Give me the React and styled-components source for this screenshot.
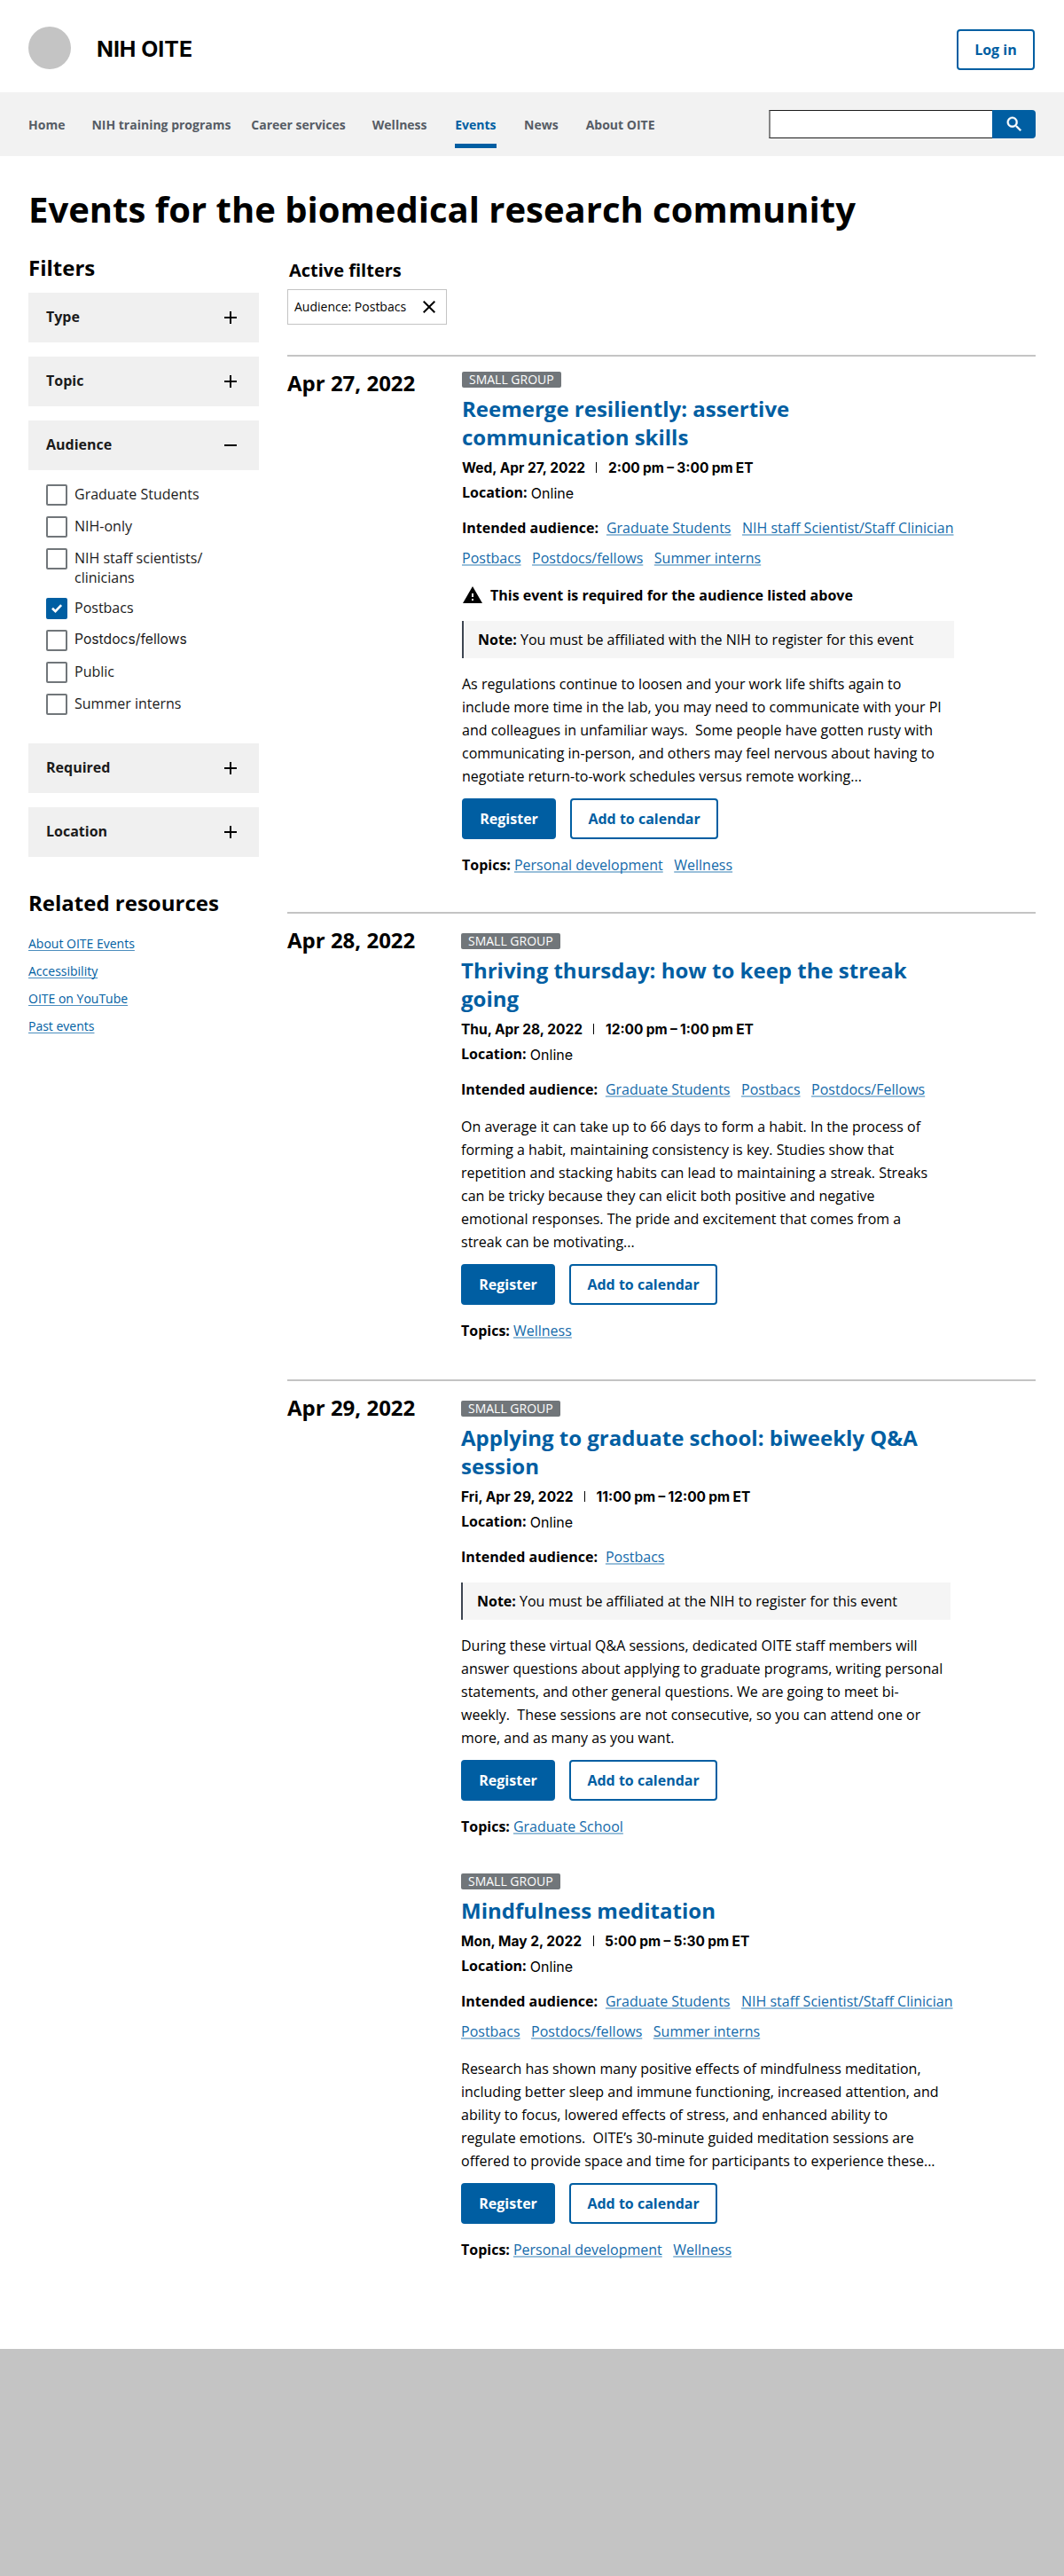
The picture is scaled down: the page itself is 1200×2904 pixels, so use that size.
import React from 'react';
import styled, { createGlobalStyle } from 'styled-components';

const blue = '#005ea2';
const sans = '"Open Sans", "Noto Sans", sans-serif';
const alt = 'Inter, Roboto, sans-serif';

const GlobalStyle = createGlobalStyle`
  * { box-sizing: border-box; }
  body { margin: 0; background: #fff; color: #000; font: 400 16px/26px ${sans}; }
  h1, h2, h3, p, ul { margin: 0; padding: 0; }
  ul { list-style: none; }
  button { font: inherit; }
`;

const Page = styled.div`
  width: 1200px;
`;

const Header = styled.header`
  display: flex;
  align-items: center;
  height: 104px;
  padding: 8px 33px 0 32px;
`;

const Logo = styled.div`
  width: 48px;
  height: 48px;
  border-radius: 50%;
  background: #c4c4c4;
  flex: none;
  margin-top: -4px;
`;

const Brand = styled.div`
  margin: -2px auto 0 29px;
  font: 700 24.8px/32px ${alt};
`;

const Button = styled.button`
  height: 46px;
  padding: 0 18.3px;
  border: 2px solid ${blue};
  border-radius: 4px;
  background: ${(p) => (p.$primary ? blue : '#fff')};
  color: ${(p) => (p.$primary ? '#fff' : blue)};
  font-weight: 700;
  line-height: 22px;
  white-space: nowrap;
`;

const NavBar = styled.nav`
  display: flex;
  align-items: center;
  height: 72px;
  padding: 0 32px;
  background: #f2f2f2;
`;

const NavItem = styled.a`
  position: relative;
  margin: 2px ${(p) => p.$gap}px 0 0;
  color: ${(p) => (p.$active ? blue : '#565c65')};
  font-size: 14px;
  font-weight: 700;
  line-height: 20px;
  white-space: nowrap;
  &::after {
    content: '';
    display: ${(p) => (p.$active ? 'block' : 'none')};
    position: absolute;
    left: 0;
    right: 0;
    top: 31px;
    height: 5px;
    background: ${blue};
  }
`;

const Search = styled.form`
  display: flex;
  margin-left: auto;
`;

const SearchInput = styled.input`
  width: 252px;
  height: 32px;
  padding: 0 8px;
  border: 1px solid #1b1b1b;
  border-left: 2px solid #868686;
  border-right: 0;
  border-radius: 0;
  background: #fff;
`;

const SearchButton = styled.button`
  display: flex;
  align-items: center;
  justify-content: center;
  width: 49px;
  height: 32px;
  padding: 0;
  border: 0;
  border-radius: 0 4px 4px 0;
  background: ${blue};
`;

const Main = styled.main`
  padding: 33px 32px 99px;
`;

const PageTitle = styled.h1`
  font-size: 40px;
  line-height: 54px;
`;

const Columns = styled.div`
  display: grid;
  grid-template-columns: 260px 844px;
  column-gap: 32px;
  align-items: start;
  margin-top: 23px;
`;

const SideHeading = styled.h2`
  font-size: 24px;
  line-height: 32px;
`;

const Accordion = styled.div`
  display: flex;
  flex-direction: column;
  gap: 16px;
  margin: 12px 0 36px;
`;

const AccordionHead = styled.div`
  display: flex;
  align-items: center;
  justify-content: space-between;
  height: 56px;
  padding: 0 20px;
  background: #f0f0f0;
  color: #1b1b1b;
  font-weight: 700;
  line-height: 22px;
`;

const AccordionLabel = styled.span`
  padding-bottom: 2px;
`;

const Options = styled.ul`
  display: flex;
  flex-direction: column;
  gap: 12px;
  padding: 0 20px 16px;
`;

const Option = styled.li`
  display: flex;
  gap: 8px;
  min-height: 24px;
  color: #1b1b1b;
  line-height: 22px;
`;

const Checkbox = styled.span`
  flex: none;
  width: 24px;
  height: 24px;
  border: 2px solid ${(p) => (p.$checked ? blue : '#71767a')};
  border-radius: 2px;
  background: ${(p) => (p.$checked ? blue : '#fff')};
  svg { display: block; margin: -2px; }
`;

const OptionText = styled.span`
  white-space: pre;
  ${(p) => p.$alt && `font-family: ${alt}; font-size: 15.7px; line-height: 21px;`}
`;

const Resources = styled.ul`
  margin-top: 14px;
  font-size: 14px;
  line-height: 31px;
`;

const SideLink = styled.a`
  color: ${blue};
  text-decoration: underline 1px #4d8ebe;
  text-underline-offset: 2px;
  text-decoration-skip-ink: none;
`;

const FiltersHeading = styled.h2`
  margin: 5px 0 7px 2px;
  font-size: 20px;
  line-height: 28px;
`;

const Tag = styled.div`
  display: inline-flex;
  align-items: center;
  justify-content: space-between;
  width: 180px;
  height: 40px;
  padding: 0 7px;
  border: 1px solid #c4c4c4;
  font-size: 14px;
  line-height: 20px;
`;

const ActiveFilters = styled.div`
  display: flex;
  height: 40px;
  margin-bottom: 34px;
`;

const DayGroup = styled.section`
  display: grid;
  grid-template-columns: ${(p) => (p.$first ? '197px' : '196px')} 560px;
  border-top: 2px solid #c4c4c4;
  padding: 14px 0 ${(p) => p.$bottom}px;
`;

const DayHeading = styled.h2`
  font-size: 24px;
  line-height: 32px;
`;

const DayEvents = styled.div`
  display: flex;
  flex-direction: column;
  gap: 40px;
  padding-top: ${(p) => (p.$first ? 3 : 8)}px;
`;

const Event = styled.article`
  display: flex;
  flex-direction: column;
  align-items: flex-start;
`;

const Badge = styled.span`
  height: 18px;
  padding: 0 8px;
  border-radius: 2px;
  background: #71767a;
  color: #fff;
  font-size: 14px;
  line-height: 18px;
`;

const EventTitle = styled.h3`
  margin: 8px 0 4px;
  color: ${blue};
  font-size: 24px;
  line-height: 32px;
  white-space: pre;
`;

const When = styled.div`
  display: flex;
  align-items: flex-start;
  height: 28px;
  font: 700 15.5px/30px ${alt};
  white-space: nowrap;
`;

const Bar = styled.span`
  width: 1px;
  height: 12px;
  margin: 8px 12.5px 0;
  background: #000;
`;

const Time = styled.span`
  word-spacing: -0.4px;
`;

const Where = styled.div`
  height: 28px;
  line-height: 28px;
`;

const Place = styled.span`
  font-family: ${alt};
  line-height: 20px;
  vertical-align: -1px;
`;

const Audience = styled.div`
  display: flex;
  flex-wrap: wrap;
  column-gap: 12.5px;
  width: 560px;
  margin-top: 9px;
  line-height: 34px;
`;

const AudienceLabel = styled.strong`
  margin-right: -3.6px;
`;

const Link = styled.a`
  color: #146aaa;
  text-decoration: underline 2px #99bfda;
  text-underline-offset: 1px;
  text-decoration-skip-ink: none;
`;

const Required = styled.div`
  display: flex;
  gap: 8px;
  height: 24px;
  margin: 13px 0 5px;
  font-weight: 700;
  line-height: 24px;
`;

const Note = styled.div`
  width: ${(p) => p.$width}px;
  height: 42px;
  margin: 12px 0 4px;
  padding-left: 16px;
  border-left: 2px solid #3d4551;
  background: #f5f5f5;
  line-height: 42px;
`;

const Summary = styled.p`
  margin: 12px 0;
  white-space: pre;
`;

const Actions = styled.div`
  display: flex;
  gap: 16px;
`;

const Topics = styled.div`
  display: flex;
  column-gap: 12.5px;
  margin-top: 16px;
`;

const TopicsLabel = styled.strong`
  margin-right: -8.5px;
`;

const Footer = styled.footer`
  height: 256px;
  background: #c4c4c4;
`;

const Icon = ({ d, size = 24, fill = '#000', ...rest }) => (
  <svg width={size} height={size} viewBox="0 0 24 24" fill={fill} {...rest}>
    <path d={d} />
  </svg>
);

const icons = {
  add: 'M19 13h-6v6h-2v-6H5v-2h6V5h2v6h6v2z',
  remove: 'M19 13H5v-2h14v2z',
  close: 'M19 6.41 17.59 5 12 10.59 6.41 5 5 6.41 10.59 12 5 17.59 6.41 19 12 13.41 17.59 19 19 17.59 13.41 12z',
  warning: 'M1 21h22L12 2 1 21zm12-3h-2v-2h2v2zm0-4h-2v-4h2v4z',
  search:
    'M15.5 14h-.79l-.28-.27A6.471 6.471 0 0 0 16 9.5 6.5 6.5 0 1 0 9.5 16c1.61 0 3.09-.59 4.23-1.57l.27.28v.79l5 4.99L20.49 19l-4.99-5zm-6 0C7.01 14 5 11.99 5 9.5S7.01 5 9.5 5 14 7.01 14 9.5 11.99 14 9.5 14z',
};

const Check = () => (
  <svg width="24" height="24" viewBox="0 0 24 24" fill="none" stroke="#fff" strokeWidth="2.6">
    <path d="M7 11.8l3.5 3.4 6.6-7" />
  </svg>
);

const nav = [
  ['Home', 30],
  ['NIH training programs', 22.8],
  ['Career services', 30],
  ['Wellness', 31.7],
  ['Events', 31.5],
  ['News', 31],
  ['About OITE', 0],
];

const options = [
  'Graduate Students',
  'NIH-only',
  'NIH staff scientists/\nclinicians',
  'Postbacs',
  'Postdocs/fellows',
  'Public',
  'Summer interns',
];

const everyone = [
  'Graduate Students',
  'NIH staff Scientist/Staff Clinician',
  'Postbacs',
  'Postdocs/fellows',
  'Summer interns',
];

const days = [
  {
    date: 'Apr 27, 2022',
    bottom: 40,
    events: [
      {
        title: 'Reemerge resiliently: assertive\ncommunication skills',
        day: 'Wed, Apr 27, 2022',
        time: '2:00 pm – 3:00 pm ET',
        audience: everyone,
        required: true,
        note: 'You must be affiliated with the NIH to register for this event',
        noteWidth: 555,
        summary: `As regulations continue to loosen and your work life shifts again to
include more time in the lab, you may need to communicate with your PI
and colleagues in unfamiliar ways.  Some people have gotten rusty with
communicating in-person, and others may feel nervous about having to
negotiate return-to-work schedules versus remote working...`,
        topics: ['Personal development', 'Wellness'],
      },
    ],
  },
  {
    date: 'Apr 28, 2022',
    bottom: 42,
    events: [
      {
        title: 'Thriving thursday: how to keep the streak\ngoing',
        day: 'Thu, Apr 28, 2022',
        time: '12:00 pm – 1:00 pm ET',
        audience: ['Graduate Students', 'Postbacs', 'Postdocs/Fellows'],
        summary: `On average it can take up to 66 days to form a habit. In the process of
forming a habit, maintaining consistency is key. Studies show that
repetition and stacking habits can lead to maintaining a streak. Streaks
can be tricky because they can elicit both positive and negative
emotional responses. The pride and excitement that comes from a
streak can be motivating...`,
        topics: ['Wellness'],
      },
    ],
  },
  {
    date: 'Apr 29, 2022',
    bottom: 0,
    events: [
      {
        title: 'Applying to graduate school: biweekly Q&A\nsession',
        day: 'Fri, Apr 29, 2022',
        time: '11:00 pm – 12:00 pm ET',
        audience: ['Postbacs'],
        note: 'You must be affiliated at the NIH to register for this event',
        noteWidth: 552,
        summary: `During these virtual Q&A sessions, dedicated OITE staff members will
answer questions about applying to graduate programs, writing personal
statements, and other general questions. We are going to meet bi-
weekly.  These sessions are not consecutive, so you can attend one or
more, and as many as you want.`,
        topics: ['Graduate School'],
      },
      {
        title: 'Mindfulness meditation',
        day: 'Mon, May 2, 2022',
        time: '5:00 pm – 5:30 pm ET',
        audience: everyone,
        summary: `Research has shown many positive effects of mindfulness meditation,
including better sleep and immune functioning, increased attention, and
ability to focus, lowered effects of stress, and enhanced ability to
regulate emotions.  OITE’s 30-minute guided meditation sessions are
offered to provide space and time for participants to experience these...`,
        topics: ['Personal development', 'Wellness'],
      },
    ],
  },
];

const EventCard = ({ event }) => (
  <Event>
    <Badge>SMALL GROUP</Badge>
    <EventTitle>{event.title}</EventTitle>
    <When>
      <span>{event.day}</span>
      <Bar />
      <Time>{event.time}</Time>
    </When>
    <Where>
      <strong>Location:</strong> <Place>Online</Place>
    </Where>
    <Audience>
      <AudienceLabel>Intended audience:</AudienceLabel>
      {event.audience.map((name) => (
        <Link key={name}>{name}</Link>
      ))}
    </Audience>
    {event.required && (
      <Required>
        <Icon d={icons.warning} />
        This event is required for the audience listed above
      </Required>
    )}
    {event.note && (
      <Note $width={event.noteWidth}>
        <strong>Note:</strong> {event.note}
      </Note>
    )}
    <Summary>{event.summary}</Summary>
    <Actions>
      <Button $primary>Register</Button>
      <Button>Add to calendar</Button>
    </Actions>
    <Topics>
      <TopicsLabel>Topics:</TopicsLabel>
      {event.topics.map((name) => (
        <Link key={name}>{name}</Link>
      ))}
    </Topics>
  </Event>
);

export default function App() {
  return (
    <Page>
      <GlobalStyle />
      <Header>
        <Logo />
        <Brand>NIH OITE</Brand>
        <Button>Log in</Button>
      </Header>
      <NavBar>
        {nav.map(([label, gap]) => (
          <NavItem key={label} $gap={gap} $active={label === 'Events'}>
            {label}
          </NavItem>
        ))}
        <Search>
          <SearchInput aria-label="Search" />
          <SearchButton type="button" aria-label="Search">
            <Icon d={icons.search} size={22} fill="#fff" stroke="#fff" strokeWidth="0.5" />
          </SearchButton>
        </Search>
      </NavBar>
      <Main>
        <PageTitle>Events for the biomedical research community</PageTitle>
        <Columns>
          <aside>
            <SideHeading>Filters</SideHeading>
            <Accordion>
              {['Type', 'Topic', 'Audience'].map((label) => (
                <AccordionHead key={label}>
                  <AccordionLabel>{label}</AccordionLabel>
                  <Icon d={label === 'Audience' ? icons.remove : icons.add} />
                </AccordionHead>
              ))}
              <Options>
                {options.map((label) => (
                  <Option key={label}>
                    <Checkbox $checked={label === 'Postbacs'}>
                      {label === 'Postbacs' && <Check />}
                    </Checkbox>
                    <OptionText $alt={label === 'Postdocs/fellows'}>{label}</OptionText>
                  </Option>
                ))}
              </Options>
              {['Required', 'Location'].map((label) => (
                <AccordionHead key={label}>
                  <AccordionLabel>{label}</AccordionLabel>
                  <Icon d={icons.add} />
                </AccordionHead>
              ))}
            </Accordion>
            <SideHeading>Related resources</SideHeading>
            <Resources>
              {['About OITE Events', 'Accessibility', 'OITE on YouTube', 'Past events'].map((label) => (
                <li key={label}>
                  <SideLink>{label}</SideLink>
                </li>
              ))}
            </Resources>
          </aside>
          <div>
            <FiltersHeading>Active filters</FiltersHeading>
            <ActiveFilters>
              <Tag>
                Audience: Postbacs
                <Icon d={icons.close} />
              </Tag>
            </ActiveFilters>
            {days.map((day, i) => (
              <DayGroup key={day.date} $first={i === 0} $bottom={day.bottom}>
                <DayHeading>{day.date}</DayHeading>
                <DayEvents $first={i === 0}>
                  {day.events.map((event) => (
                    <EventCard key={event.title} event={event} />
                  ))}
                </DayEvents>
              </DayGroup>
            ))}
          </div>
        </Columns>
      </Main>
      <Footer />
    </Page>
  );
}
